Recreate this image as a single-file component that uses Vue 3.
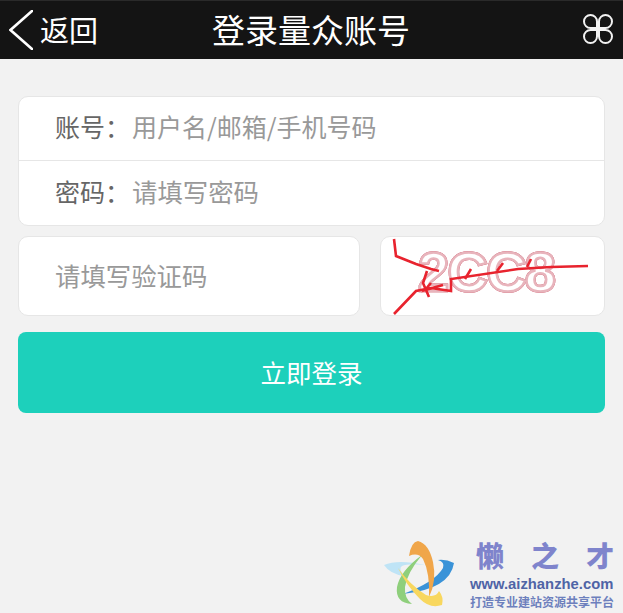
<script setup>
const captchaLines = [
  'M13 2 L15 19 L35 27 L50 32 L58 34',
  'M13 77 L35 54 L50 51 L70 54 L70 42 L137 32 L170 30 L207 29',
  'M46 34 L42 46 L48 60',
  'M50 46 L44 53 L62 48',
  'M122 26 L116 34',
  'M90 32 L84 42',
  'M150 22 L146 30'
]
</script>

<template>
  <div class="page">
    <header class="topbar">
      <a class="back">
        <svg class="chevron" viewBox="0 0 24 40" aria-hidden="true">
          <path d="M23 1 L1.5 20 L23 39" />
        </svg>
        <span>返回</span>
      </a>
      <h1 class="title">登录量众账号</h1>
      <svg class="menu" viewBox="0 0 30 30" aria-hidden="true">
        <path d="M14 14 H7.5 A6.5 6.5 0 1 1 14 7.5 Z" />
        <path d="M16 14 H22.5 A6.5 6.5 0 1 0 16 7.5 Z" />
        <path d="M14 16 H7.5 A6.5 6.5 0 1 0 14 22.5 Z" />
        <path d="M16 16 H22.5 A6.5 6.5 0 1 1 16 22.5 Z" />
      </svg>
    </header>

    <main class="form">
      <section class="card">
        <div class="row">
          <span class="label">账号：</span>
          <span class="hint">用户名/邮箱/手机号码</span>
        </div>
        <div class="row">
          <span class="label">密码：</span>
          <span class="hint wide">请填写密码</span>
        </div>
      </section>

      <div class="verify">
        <div class="code-input"><span class="hint wide">请填写验证码</span></div>
        <div class="captcha">
          <svg viewBox="0 0 225 80" aria-label="验证码">
            <text class="digits" x="37" y="54" textLength="138">2CC8</text>
            <path v-for="line in captchaLines" :key="line" class="scratch" :d="line" />
          </svg>
        </div>
      </div>

      <button class="submit" type="button">立即登录</button>
    </main>

    <aside class="mark">
      <svg class="mark-logo" viewBox="0 0 80 75" aria-hidden="true">
        <path fill="#bfe4f6" d="M4 30 Q18 24 45 30 Q28 28 22 31 Q18 33 24 41 Q10 39 4 30Z" />
        <path fill="#3a93d8" d="M74 28 Q66 24 58 25 Q65 27 63 33 Q55 47 23 59 Q70 54 74 28Z" />
        <path fill="#8fcf7c" d="M42 20 Q20 36 17 52 Q15 68 32 69 Q24 63 25 52 Q27 38 42 20Z" />
        <path fill="#f0a64a" d="M29 21 Q31 7 38 6 Q49 9 53 27 Q57 46 49 62 Q50 38 43 24 Q38 17 29 21Z" />
        <path fill="#f8d75e" d="M18 33 Q30 50 46 60 Q56 63 59 56 Q64 62 62 70 Q50 74 40 64 Q26 50 18 33Z" />
      </svg>
      <div class="mark-text">
        <div class="mark-name"><span>懒</span><span>之</span><span>才</span></div>
        <div class="mark-url">www.aizhanzhe.com</div>
        <div class="mark-slogan">打造专业建站资源共享平台</div>
      </div>
    </aside>
  </div>
</template>

<style scoped>
.page {
  position: relative;
  width: 623px;
  height: 613px;
  overflow: hidden;
  background: #f2f2f2;
  font-family: "Noto Sans CJK SC", "Liberation Sans", sans-serif;
}
.topbar {
  box-sizing: border-box;
  height: 59px;
  display: flex;
  align-items: center;
  justify-content: space-between;
  padding: 0 10px 0 9px;
  background: #141414;
  border-top: 1px solid #2a2a2a;
  color: #fff;
}
.back {
  width: 150px;
  display: flex;
  align-items: center;
  gap: 7px;
  font-size: 29px;
  line-height: 40px;
}
.back span {
  padding-bottom: 2px;
}
.chevron {
  width: 24px;
  height: 40px;
  flex: none;
}
.chevron path {
  fill: none;
  stroke: #fff;
  stroke-width: 2.6;
  stroke-linecap: round;
}
.title {
  margin: 0;
  padding-bottom: 2px;
  font-size: 33px;
  font-weight: 400;
  line-height: 40px;
  position: relative;
  left: -60px;
}
.menu {
  width: 30px;
  height: 30px;
  margin-bottom: 2px;
}
.menu path {
  fill: none;
  stroke: #f2f2f2;
  stroke-width: 2;
}
.form {
  display: flex;
  flex-direction: column;
  padding: 37px 18px 0;
}
.card,
.code-input,
.captcha {
  box-sizing: border-box;
  background: #fff;
  border: 1px solid #e6e6e6;
  border-radius: 10px;
}
.row {
  box-sizing: border-box;
  height: 63px;
  display: flex;
  align-items: center;
  padding: 0 0 5px 36px;
  font-size: 25px;
}
.row + .row {
  height: 65px;
  padding-bottom: 4px;
  border-top: 1px solid #e6e6e6;
}
.label {
  width: 77px;
  flex: none;
  color: #666;
}
.hint {
  color: #999;
  font-size: 25px;
}
.hint.wide {
  font-size: 25.4px;
}
.verify {
  display: flex;
  justify-content: space-between;
  margin-top: 10px;
}
.code-input {
  width: 342px;
  height: 80px;
  display: flex;
  align-items: center;
  padding: 0 0 2px 36px;
}
.captcha {
  width: 225px;
  height: 80px;
  overflow: hidden;
}
.captcha svg {
  display: block;
  width: 225px;
  height: 80px;
}
.digits {
  font-family: "Liberation Sans", sans-serif;
  font-size: 56px;
  font-weight: 700;
  fill: #fff;
  stroke: #e8b4bc;
  stroke-width: 2.5;
  filter: drop-shadow(0 0 0.6px #c23a50);
}
.scratch {
  fill: none;
  stroke: #e8232e;
  stroke-width: 2.6;
}
.submit {
  height: 81px;
  margin-top: 16px;
  padding: 0 0 3px;
  border: 0;
  border-radius: 8px;
  background: #1dd0bb;
  color: #fff;
  font-family: inherit;
  font-size: 25.5px;
}
.mark {
  position: absolute;
  left: 380px;
  top: 535px;
  display: flex;
  gap: 10px;
}
.mark-logo {
  width: 80px;
  height: 75px;
  flex: none;
}
.mark-text {
  width: 146px;
}
.mark-name {
  display: flex;
  justify-content: space-between;
  height: 41px;
  padding: 0 2px 0 6px;
  color: #7f84cc;
  font-size: 28px;
  font-weight: 900;
  line-height: 41px;
}
.mark-url {
  color: #4f64a6;
  font-family: "Liberation Sans", sans-serif;
  font-size: 14.8px;
  font-weight: 700;
  line-height: 17px;
  white-space: nowrap;
}
.mark-slogan {
  color: #6d80bd;
  font-size: 12px;
  font-weight: 700;
  line-height: 18px;
  white-space: nowrap;
}
</style>
